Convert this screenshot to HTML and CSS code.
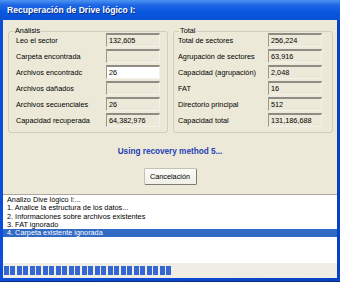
FILE: index.html
```html
<!DOCTYPE html>
<html lang="es">
<head>
    <meta charset="UTF-8">
    <title>Recuperación de Drive lógico I:</title>
    <link rel="stylesheet" href="styles.css">
</head>
<body>
    <div class="window">
        <div class="titlebar">Recuperación de Drive lógico I:</div>
        <div class="frame">
            <div class="groups">
                <fieldset class="group group-left">
                    <legend>Análisis</legend>
                    <div class="rows">
                        <span class="label">Leo el sector</span><span class="field">132,605</span>
                        <span class="label">Carpeta encontrada</span><span class="field"></span>
                        <span class="label">Archivos encontradc</span><span class="field field-active">26</span>
                        <span class="label">Archivos dañados</span><span class="field"></span>
                        <span class="label">Archivos secuenciales</span><span class="field">26</span>
                        <span class="label">Capacidad recuperada</span><span class="field">64,382,976</span>
                    </div>
                </fieldset>
                <fieldset class="group group-right">
                    <legend>Total</legend>
                    <div class="rows">
                        <span class="label">Total de sectores</span><span class="field">256,224</span>
                        <span class="label">Agrupación de sectores</span><span class="field">63,916</span>
                        <span class="label">Capacidad (agrupación)</span><span class="field">2,048</span>
                        <span class="label">FAT</span><span class="field">16</span>
                        <span class="label">Directorio principal</span><span class="field">512</span>
                        <span class="label">Capacidad total</span><span class="field">131,186,688</span>
                    </div>
                </fieldset>
            </div>
            <div class="status">Using recovery method 5...</div>
            <div class="actions">
                <button class="btn">Cancelación</button>
            </div>
            <div class="log">
                <div class="log-line">Analizo Dive lógico I:...</div>
                <div class="log-line">1. Analice la estructura de los datos...</div>
                <div class="log-line">2. Informaciones sobre archivos existentes</div>
                <div class="log-line">3. FAT ignorado</div>
                <div class="log-line selected">4. Carpeta existente ignorada</div>
            </div>
            <div class="progress">
                <div class="progress-fill" style="width: 168px"></div>
            </div>
        </div>
    </div>
</body>
</html>
```

FILE: styles.css
```css
body {
    margin: 0;
    width: 340px;
    height: 282px;
    overflow: hidden;
    font-family: "Liberation Sans", Arial, sans-serif;
    font-size: 7.3px;
    color: #000;
    background: #0a47d2;
}
.window {
    height: 282px;
    display: flex;
    flex-direction: column;
    background: linear-gradient(90deg, #0b4fd8, #0a4ad0 50%, #0842c4);
    border-bottom: 1px solid #0a2a80;
    box-sizing: border-box;
}
.titlebar {
    height: 20px;
    flex: none;
    display: flex;
    align-items: center;
    padding-left: 7px;
    color: #fff;
    font-weight: bold;
    font-size: 8.6px;
    text-shadow: 1px 1px 0 #0a2a80;
    background: linear-gradient(#4d94f4, #1f66e4 25%, #0a58e0 60%, #0a50d4);
}
.frame {
    flex: 1;
    margin: 0 3px 3px;
    background: #ece9d8;
    display: flex;
    flex-direction: column;
}
.groups {
    display: flex;
    gap: 5px;
    padding: 7px 4px 0 5px;
}
.group {
    flex: 1;
    margin: 0;
    padding: 0 7px 5px;
    border: 1px solid #d0cebf;
    border-radius: 3px;
    min-width: 0;
}
.group-right {
    padding-left: 4px;
    padding-right: 10px;
}
.group legend {
    padding: 0 1px;
    margin-left: -2px;
    line-height: 8px;
}
.group-right legend {
    margin-left: 1px;
}
.rows {
    display: grid;
    grid-template-columns: 1fr 54px;
    grid-auto-rows: 14px;
    row-gap: 2px;
    margin-top: -2px;
}
.label {
    display: flex;
    align-items: center;
    white-space: nowrap;
    overflow: hidden;
}
.field {
    display: flex;
    align-items: center;
    padding-left: 2px;
    box-sizing: border-box;
    border-top: 2px solid #8e8c84;
    border-left: 1px solid #9a978e;
    border-bottom: 1px solid #f4f2ea;
    border-right: 1px solid #f4f2ea;
    background: #ece9d8;
}
.field-active {
    background: #fff;
}
.status {
    margin-top: 14px;
    text-align: center;
    font-weight: bold;
    font-size: 8.2px;
    line-height: 10px;
    color: #1c3db5;
}
.actions {
    display: flex;
    justify-content: center;
    margin-top: 11px;
}
.btn {
    width: 53px;
    height: 17px;
    padding: 0;
    font-family: inherit;
    font-size: 7.3px;
    color: #000;
    background: linear-gradient(#fbfbf8, #f0efe8);
    border: 1px solid #c4c0b2;
    border-right-color: #7c7a72;
    border-bottom-color: #7c7a72;
    border-radius: 2px;
}
.log {
    margin-top: 9px;
    height: 69px;
    box-sizing: border-box;
    padding-top: 1px;
    background: #fff;
    border-top: 1px solid #a9a7a0;
}
.log-line {
    height: 8.3px;
    line-height: 8.3px;
    padding-left: 4px;
    white-space: nowrap;
}
.log-line.selected {
    background: #316ac5;
    color: #fff;
}
.progress {
    flex: 1;
    padding: 3px 1px;
    background: #f0eee4;
    box-sizing: border-box;
}
.progress-fill {
    height: 100%;
    background: repeating-linear-gradient(90deg, #3466d4 0 5px, transparent 5px 6.5px);
}
```
